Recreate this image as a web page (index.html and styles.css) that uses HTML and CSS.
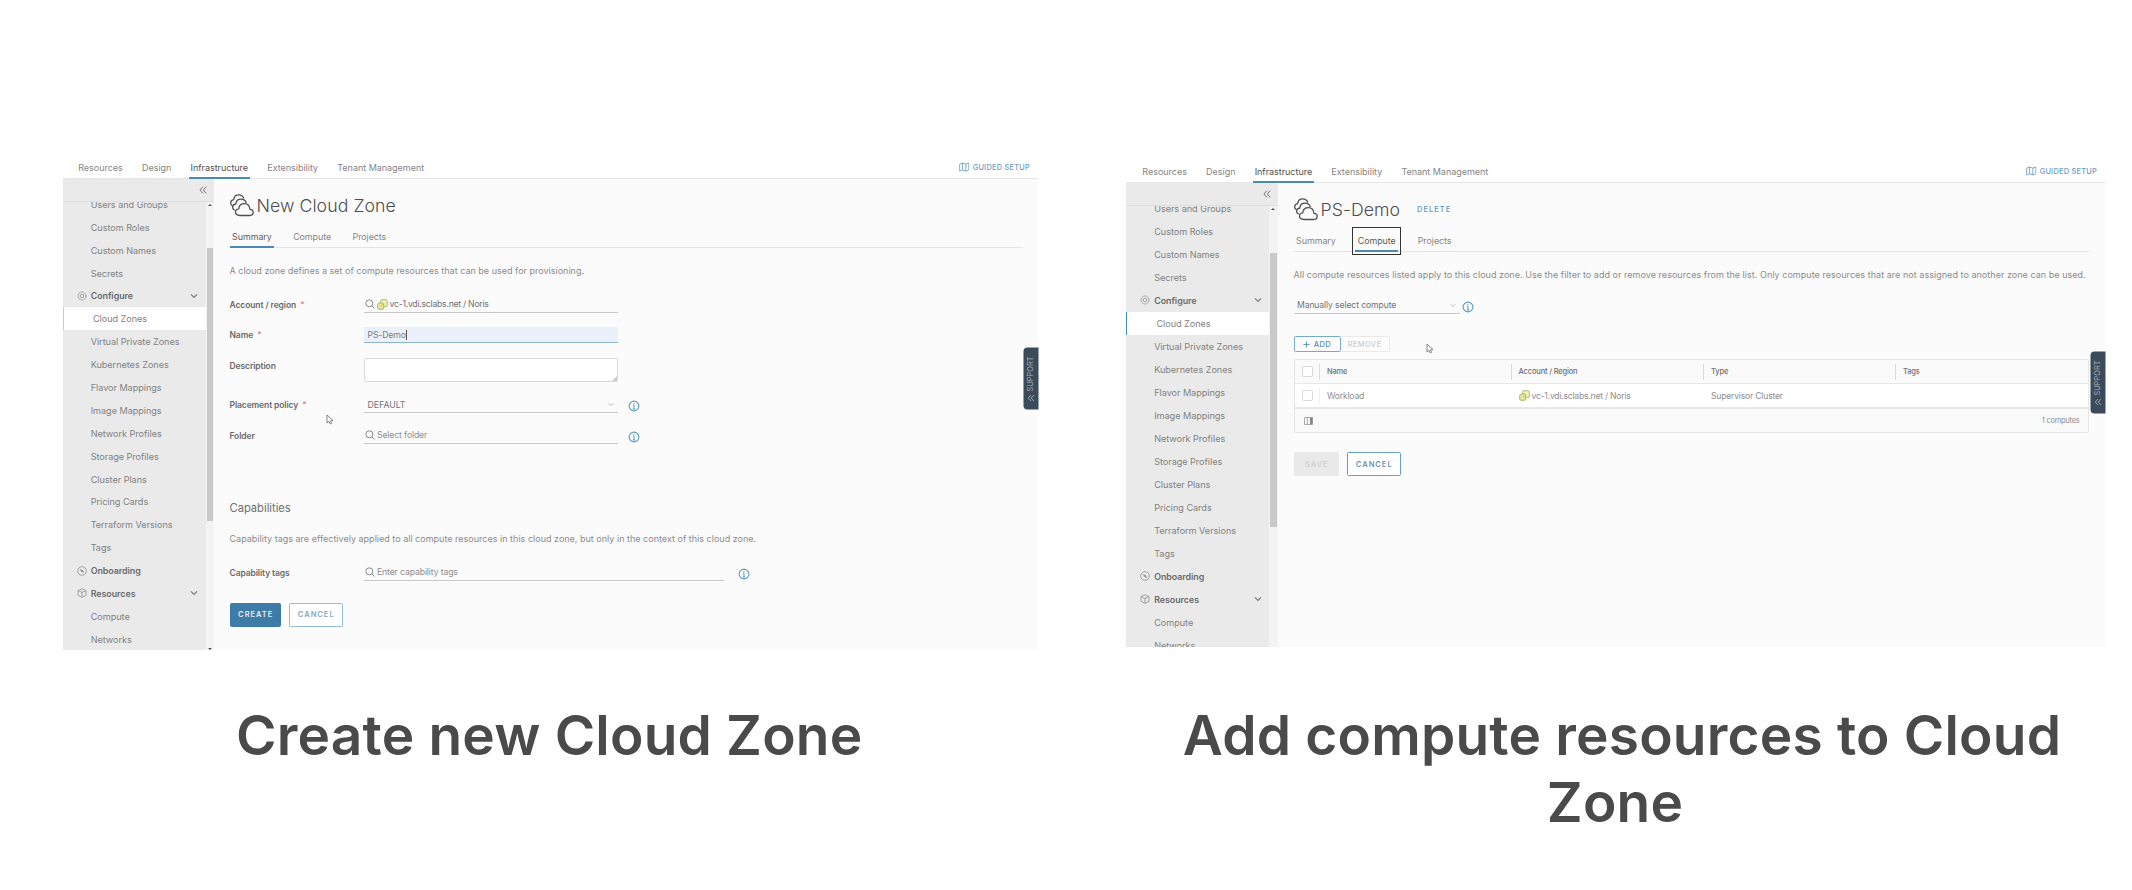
FILE: index.html
```
<!DOCTYPE html>
<html lang="en">
<head>
<meta charset="utf-8">
<title>Cloud Zones</title>
<link rel="stylesheet" href="styles.css">
</head>
<body>
<svg class="defs" width="0" height="0" aria-hidden="true">
  <symbol id="clouds" viewBox="0 0 24 23">
    <g fill="none" stroke="currentColor" stroke-width="1.3" stroke-linejoin="round" stroke-linecap="round">
      <path d="M10 21.5h9.600c2.200 0 3.600-1.400 3.600-3.200s-1.600-3-3.300-3C19.600 12 17.400 9.600 14.300 9.600c-3.200 0-5.300 2.200-5.500 5.200-2 .2-3.300 1.600-3.300 3.300 0 2 1.600 3.400 4.500 3.400z"/>
      <path d="M4.300 15.800C3 15.200 2.600 14.200 2.600 13.200c0-1.700 1.400-3 3.200-3.200.3-3 2.300-4.900 5.200-4.900 2.600 0 4.500 1.400 5.200 3.600"/>
      <path d="M1.800 11.300C.9 10.600.7 9.600.7 8.800c0-1.600 1.200-2.900 3-3.100C4 2.700 6 .9 8.700.9c2.400 0 4.100 1.200 5 3.200"/>
    </g>
  </symbol>
  <symbol id="search" viewBox="0 0 10 10"><circle cx="4.300" cy="4.300" r="3.500" fill="none" stroke="currentColor"/><path d="M6.900 6.900 9.500 9.500" stroke="currentColor"/></symbol>
  <symbol id="vc" viewBox="0 0 11 11"><rect x="3.600" y=".7" width="6.700" height="7" rx="1.600" fill="#eef0b4" stroke="#a9b97b"/><rect x=".7" y="4" width="6" height="6.300" rx="1.500" fill="#e3e79f" stroke="#a9b96b"/><path d="M4 7.200 7 4.200" stroke="#e9c94e" stroke-width="1.200"/></symbol>
  <symbol id="info" viewBox="0 0 12 12"><circle cx="6" cy="6" r="4.900" fill="none" stroke="currentColor" stroke-width="1.100"/><path d="M6 3v1.200M5 5.200h1V9M4.700 9h2.600" fill="none" stroke="currentColor" stroke-width="1"/></symbol>
  <symbol id="down" viewBox="0 0 8 6"><path d="M1 1.300 4 4.400 7 1.300" fill="none" stroke="currentColor" stroke-width="1.100"/></symbol>
  <symbol id="collapse" viewBox="0 0 8 8"><path d="M4 .6.900 4 4 7.400M7.300.6 4.200 4l3.100 3.400" fill="none" stroke="currentColor" stroke-width="1"/></symbol>
  <symbol id="map" viewBox="0 0 11 10"><path d="M.7 2 3.700.8 7.200 2 10.300.8V8L7.200 9.200 3.700 8 .7 9.200zM3.700.8V8M7.200 2v7.200" fill="none" stroke="currentColor" stroke-width=".9"/></symbol>
  <symbol id="gear" viewBox="0 0 10 10"><circle cx="5" cy="5" r="4" fill="none" stroke="currentColor" stroke-width=".9" stroke-dasharray="2 .5"/><circle cx="5" cy="5" r="1.800" fill="none" stroke="currentColor" stroke-width=".8"/></symbol>
  <symbol id="compass" viewBox="0 0 10 10"><circle cx="5" cy="5" r="4.300" fill="none" stroke="currentColor" stroke-width=".8"/><path d="M2.800 2.900 5.900 4.200 7.200 7.100 4.200 5.800z" fill="currentColor"/></symbol>
  <symbol id="cube" viewBox="0 0 10 10"><path d="M5 .8 9 2.600V7.400L5 9.300 1 7.400V2.600zM1 2.600 5 4.400 9 2.600M5 4.400V9.300" fill="none" stroke="currentColor" stroke-width=".8"/></symbol>
  <symbol id="pointer" viewBox="0 0 8 12"><path d="M1 1v8l2-1.600L4.300 10l1.300-.7L4.500 6.800 7 6.500z" fill="#fff" stroke="#777" stroke-width=".9" stroke-linejoin="round"/></symbol>
</svg>

<main class="board">
  <section class="slide slide-create">
    <div class="app">
      <header class="topnav">
        <nav><a>Resources</a><a>Design</a><a class="on">Infrastructure</a><a>Extensibility</a><a>Tenant Management</a></nav>
        <a class="guided"><svg><use href="#map"/></svg>GUIDED SETUP</a>
      </header>
      <div class="body">
        <aside class="side">
          <div class="strip"><svg><use href="#collapse"/></svg></div>
          <div class="scroll">
            <ul>
              <li>Users and Groups</li><li>Custom Roles</li><li>Custom Names</li><li>Secrets</li>
              <li class="group"><svg class="gi"><use href="#gear"/></svg>Configure<svg class="ch"><use href="#down"/></svg></li>
              <li class="current">Cloud Zones</li>
              <li>Virtual Private Zones</li><li>Kubernetes Zones</li><li>Flavor Mappings</li><li>Image Mappings</li><li>Network Profiles</li><li>Storage Profiles</li><li>Cluster Plans</li><li>Pricing Cards</li><li>Terraform Versions</li><li>Tags</li>
              <li class="group"><svg class="gi"><use href="#compass"/></svg>Onboarding</li>
              <li class="group"><svg class="gi"><use href="#cube"/></svg>Resources<svg class="ch"><use href="#down"/></svg></li>
              <li>Compute</li><li>Networks</li>
            </ul>
            <div class="bar"><i class="up"></i><b></b><i class="dn"></i></div>
          </div>
        </aside>
        <div class="content">
          <div class="title"><svg><use href="#clouds"/></svg><h1>New Cloud Zone</h1></div>
          <div class="tabs"><a class="on">Summary</a><a>Compute</a><a>Projects</a></div>
          <p class="lead">A cloud zone defines a set of compute resources that can be used for provisioning.</p>
          <div class="row r-account"><label>Account / region <em>*</em></label><div class="field dark"><svg class="s"><use href="#search"/></svg><svg class="v"><use href="#vc"/></svg><span class="vct">vc-1.vdi.sclabs.net / Noris</span></div></div>
          <div class="row r-name"><label>Name <em>*</em></label><div class="field focus"><span>PS-Demo</span><i class="caret"></i></div></div>
          <div class="row r-desc"><label>Description</label><div class="area"><svg viewBox="0 0 6 6"><path d="M0 6 6 0V6z" fill="#ccc"/></svg></div></div>
          <div class="row r-policy"><label>Placement policy <em>*</em></label><div class="field dark pad"><span class="def">DEFAULT</span><svg class="c"><use href="#down"/></svg></div><svg class="info"><use href="#info"/></svg></div>
          <div class="row r-folder"><label>Folder</label><div class="field"><svg class="s"><use href="#search"/></svg><span class="ph">Select folder</span></div><svg class="info"><use href="#info"/></svg></div>
          <h2>Capabilities</h2>
          <p class="lead caps">Capability tags are effectively applied to all compute resources in this cloud zone, but only in the context of this cloud zone.</p>
          <div class="row r-tags"><label>Capability tags</label><div class="field wide"><svg class="s"><use href="#search"/></svg><span class="ph">Enter capability tags</span></div><svg class="info far"><use href="#info"/></svg></div>
          <div class="actions"><button class="btn primary">CREATE</button><button class="btn outline soft">CANCEL</button></div>
        </div>
      </div>
      <div class="support"><svg><use href="#collapse"/></svg>SUPPORT</div>
      <svg class="pointer"><use href="#pointer"/></svg>
    </div>
    <h3>Create new Cloud Zone</h3>
  </section>

  <section class="slide slide-compute">
    <div class="app">
      <header class="topnav">
        <nav><a>Resources</a><a>Design</a><a class="on">Infrastructure</a><a>Extensibility</a><a>Tenant Management</a></nav>
        <a class="guided"><svg><use href="#map"/></svg>GUIDED SETUP</a>
      </header>
      <div class="body">
        <aside class="side">
          <div class="strip"><svg><use href="#collapse"/></svg></div>
          <div class="scroll">
            <ul>
              <li>Users and Groups</li><li>Custom Roles</li><li>Custom Names</li><li>Secrets</li>
              <li class="group"><svg class="gi"><use href="#gear"/></svg>Configure<svg class="ch"><use href="#down"/></svg></li>
              <li class="current">Cloud Zones</li>
              <li>Virtual Private Zones</li><li>Kubernetes Zones</li><li>Flavor Mappings</li><li>Image Mappings</li><li>Network Profiles</li><li>Storage Profiles</li><li>Cluster Plans</li><li>Pricing Cards</li><li>Terraform Versions</li><li>Tags</li>
              <li class="group"><svg class="gi"><use href="#compass"/></svg>Onboarding</li>
              <li class="group"><svg class="gi"><use href="#cube"/></svg>Resources<svg class="ch"><use href="#down"/></svg></li>
              <li>Compute</li><li>Networks</li>
            </ul>
            <div class="bar"><i class="up"></i><b></b></div>
          </div>
        </aside>
        <div class="content">
          <div class="title"><svg><use href="#clouds"/></svg><h1>PS-Demo</h1><a class="delete">DELETE</a></div>
          <div class="tabs"><a>Summary</a><a class="on boxed">Compute</a><a>Projects</a></div>
          <p class="lead">All compute resources listed apply to this cloud zone. Use the filter to add or remove resources from the list. Only compute resources that are not assigned to another zone can be used.</p>
          <div class="filter"><div class="field dark"><span>Manually select compute</span><svg class="c"><use href="#down"/></svg></div><svg class="info"><use href="#info"/></svg></div>
          <div class="tools"><button class="add"><svg viewBox="0 0 8 8"><path d="M4 .5v7M.5 4h7" stroke="currentColor"/></svg>ADD</button><button class="remove">REMOVE</button></div>
          <div class="table">
            <div class="tr th"><i class="box"></i><span>Name</span><span>Account / Region</span><span>Type</span><span>Tags</span></div>
            <div class="tr td"><i class="box"></i><span>Workload</span><span class="acct"><svg class="v"><use href="#vc"/></svg>vc-1.vdi.sclabs.net / Noris</span><span>Supervisor Cluster</span><span></span></div>
            <div class="tf"><svg viewBox="0 0 9 8"><path d="M.5.5h8v7h-8zM3.300.5v7" fill="none" stroke="#999" stroke-width=".8"/><path d="M6 .5h2.500v7H6z" fill="#888"/></svg><span>1 computes</span></div>
          </div>
          <div class="actions"><button class="btn disabled">SAVE</button><button class="btn outline">CANCEL</button></div>
        </div>
      </div>
      <div class="support"><svg><use href="#collapse"/></svg>SUPPORT</div>
      <svg class="pointer"><use href="#pointer"/></svg>
    </div>
    <h3>Add compute resources to Cloud Zone&nbsp;</h3>
  </section>
</main>
</body>
</html>
```
FILE: styles.css
```
* { box-sizing: border-box; }
body { margin: 0; background: #fff; font-family: Inter, "Liberation Sans", sans-serif; color: #777; }
h1, h2, h3, p, ul { margin: 0; padding: 0; font-weight: 400; }
ul { list-style: none; }
svg { display: block; flex: none; overflow: visible; }
button { font-family: inherit; margin: 0; padding: 0; }
.defs { position: absolute; }

.board { display: flex; height: 890px; overflow: hidden; }
.slide { flex: none; }
.slide-create { width: 975.500px; margin-left: 62.500px; padding-top: 155.800px; --pitch: 22.9px; }
.slide-compute { width: 979px; margin-left: 88px; padding-top: 159.800px; --pitch: 23px; }
.app { position: relative; display: flex; flex-direction: column; }
.slide-create .app { height: 494.200px; }
.slide-compute .app { height: 486.800px; }

.topnav { flex: none; height: 23.500px; border-bottom: 1px solid #e6e6e6; display: flex; justify-content: space-between; font-size: 9px; line-height: 23px; letter-spacing: -.02px; color: #858585; }
.topnav nav { display: flex; padding-left: 13.700px; }
.topnav nav a { height: 23.500px; padding: 0 2px; margin-right: 15.200px; }
.topnav nav a.on { color: #505050; border-bottom: 2px solid #4a8ab5; }
.slide-compute .topnav nav { padding-left: 14.300px; }
.guided { display: flex; align-items: center; gap: 3px; margin-right: 8px; font-size: 7.400px; font-weight: 500; letter-spacing: .25px; color: #6a9dbd; }
.guided svg { width: 10.500px; height: 10px; }

.body { flex: 1; min-height: 0; display: flex; background: #fbfbfb; }
.side { flex: none; width: 151.500px; display: flex; flex-direction: column; background: #eaeaea; }
.strip { flex: none; height: 23px; border-bottom: 1px solid #dedede; display: flex; align-items: center; justify-content: flex-end; padding-right: 7px; color: #777; }
.strip svg { width: 8px; height: 8px; }
.scroll { flex: 1; min-height: 0; display: flex; overflow: hidden; }
.scroll ul { width: 143px; margin-top: -9.400px; }
.scroll li { display: flex; align-items: center; height: var(--pitch); padding-left: 28.200px; font-size: 9.100px; letter-spacing: -.03px; color: #828282; white-space: nowrap; }
.scroll .group { padding-left: 14px; font-weight: 600; font-size: 8.900px; letter-spacing: -.05px; color: #6a6a6a; }
.gi { width: 10px; height: 10px; margin-right: 4.200px; color: #929292; }
.ch { width: 8px; height: 6px; margin-left: auto; margin-right: 7.500px; color: #777; }
.scroll .current { background: #fff; border-left: 1px solid #4a8ab5; padding-left: 29.500px; }
.slide-create .current { border-color: #b5d0e2; }
.bar { width: 8.500px; display: flex; flex-direction: column; align-items: center; background: #f3f3f3; }
.bar b { width: 6.500px; height: 272.500px; margin-top: 42px; background: #c9c9c9; }
.up, .dn { width: 0; height: 0; border: 2px solid transparent; }
.up { border-bottom-color: #555; margin-top: 2px; border-top-width: 0; }
.dn { border-top-color: #555; margin-top: auto; border-bottom-width: 0; }

.content { flex: 1; padding-left: 15.500px; padding-right: 16px; }
.title { display: flex; align-items: center; height: 31px; margin-top: 10.800px; color: #4e4e4e; }
.title svg { width: 24px; height: 23px; }
h1 { margin-left: 3px; font-size: 17.700px; line-height: 31px; font-weight: 300; letter-spacing: .06px; }
.delete { margin-left: 17px; font-size: 7.500px; font-weight: 500; letter-spacing: 1px; color: #5c97bd; }
.tabs { display: flex; height: 21.500px; margin-top: 5px; border-bottom: 1px solid #e4e4e4; font-size: 8.900px; line-height: 21px; letter-spacing: -.04px; color: #858585; }
.tabs a { height: 21.500px; padding: 0 2.600px; margin-right: 16.200px; }
.tabs .on { color: #5c5c5c; border-bottom: 2px solid #4a8ab5; }
.slide-compute .tabs a { margin-right: 16.800px; }
.tabs .boxed { outline: 1px solid #333; outline-offset: 2px; }
.lead { margin-top: 13.300px; font-size: 9px; line-height: 20px; letter-spacing: .01px; white-space: nowrap; color: #8b8b8b; }
.slide-compute .lead { letter-spacing: .04px; }

.row { display: flex; height: 16px; font-size: 8.700px; letter-spacing: -.14px; }
.row label { width: 134.500px; font-size: 8.500px; font-weight: 600; line-height: 16px; letter-spacing: -.1px; color: #6a6a6a; }
.row em { margin-left: 2px; color: #c78b8b; font-style: normal; font-weight: 400; }
.field { display: flex; align-items: center; width: 254px; height: 16px; border-bottom: 1px solid #c8c8c8; color: #8e8e8e; }
.field.dark { color: #727272; }
.field .s { width: 10px; height: 10px; margin-left: .5px; color: #888; }
.field .v { width: 11px; height: 11px; margin: 0 2px; }
.field .vct { letter-spacing: -.26px; }
.field .def { letter-spacing: .03px; }
.field .ph { margin-left: 2.500px; }
.field .c { width: 6px; height: 5px; margin-left: auto; margin-right: 4px; color: #aaa; }
.field.pad, .focus { padding-left: 3.500px; }
.focus { background: #ebf1fb; border-color: #8fb4cd; color: #7c7c7c; }
.caret { width: 1px; height: 10px; background: #555; }
.info { width: 12px; height: 12px; margin: 3px 0 0 9.700px; color: #5d9bc2; }
.info.far { margin-left: 14px; }
.area { width: 254px; height: 24px; background: #fff; border: 1px solid #dadada; border-radius: 2px; display: flex; align-items: flex-end; justify-content: flex-end; }
.area svg { width: 5px; height: 5px; }
.r-account { margin-top: 16px; }
.r-name { margin-top: 14.500px; }
.r-desc { margin-top: 15px; height: 24px; }
.r-policy { margin-top: 15px; }
.r-folder { margin-top: 14.500px; }
h2 { margin-top: 54.200px; font-size: 11.200px; line-height: 20px; letter-spacing: -.02px; color: #707070; }
.lead.caps { margin-top: 10.500px; }
.r-tags { margin-top: 16px; }
.field.wide { width: 360px; }

.actions { display: flex; gap: 8px; margin-top: 22.500px; }
.btn { height: 23.500px; border: 1px solid transparent; border-radius: 1.500px; font-size: 7.500px; font-weight: 600; letter-spacing: 1px; text-indent: 1px; }
.primary { width: 51.500px; background: #3f7ba7; border-color: #3f7ba7; color: #e4eef5; }
.outline { width: 53.500px; background: #fff; border-color: #6b9fc2; color: #6594b4; }
.soft { border-color: #9bbdd4; color: #84a8c0; }
.disabled { width: 45.500px; background: #e9e9e9; color: #d0d0d0; }

.slide-compute .bar b { height: 274px; margin-top: 43px; }
.slide-compute .content { padding-left: 16px; }
.filter { display: flex; margin-top: 12.300px; font-size: 8.600px; letter-spacing: -.1px; }
.filter .field { width: 166px; height: 17px; padding-left: 3.500px; }
.filter .info { margin: 4px 0 0 2.500px; }
.tools { display: flex; margin-top: 22.200px; font-size: 7.500px; }
.tools button { height: 16px; font-size: 7.500px; font-weight: 500; letter-spacing: .4px; background: #fdfdfd; border-radius: 1.500px; display: flex; align-items: center; justify-content: center; }
.tools .add { width: 47px; gap: 4px; border: 1px solid #78abc9; color: #558fb4; }
.add svg { width: 7px; height: 7px; }
.tools .remove { width: 49px; border: 1px solid #e9e9e9; border-left: 0; color: #ccc; }
.table { width: 795px; margin-top: 7px; border: 1px solid #e6e6e6; border-radius: 2px; background: #fafafa; }
.tr { display: grid; grid-template-columns: 24.500px 191.500px 192.500px 192px 1fr; align-items: center; height: 24px; font-size: 8.600px; letter-spacing: -.2px; border-bottom: 1px solid #e8e8e8; }
.tr span { display: flex; align-items: center; height: 16px; padding-left: 7px; }
.th { font-size: 7.500px; font-weight: 500; letter-spacing: -.16px; color: #707070; }
.th span { border-left: 1px solid #dcdcdc; }
.td { height: 25px; background: #fff; border-bottom: 2px solid #e8e8e8; color: #8e8e8e; }
.td span { padding-left: 8px; }
.td span:nth-child(2) { border-left: 1px solid #eee; padding-left: 7px; }
.td .v { width: 11px; height: 11px; margin-right: 2px; }
.td .acct { letter-spacing: -.22px; }
.box { width: 11px; height: 11px; margin-left: 7.500px; background: #fff; border: 1px solid #dadada; border-radius: 2px; }
.tf { display: flex; align-items: center; justify-content: space-between; height: 23px; padding: 0 8px 0 9.500px; font-size: 7.500px; letter-spacing: -.25px; color: #8e8e8e; }
.tf svg { width: 9px; height: 8px; }
.slide-compute .actions { margin-top: 19px; }

.support { position: absolute; right: 0; top: 192px; width: 14.500px; height: 61.500px; background: #3b4b5b; border-radius: 0 4px 4px 0; writing-mode: vertical-rl; transform: rotate(180deg); display: flex; align-items: center; padding-top: 8px; gap: 3px; font-size: 7.500px; letter-spacing: -.05px; color: #a9b3bc; line-height: 14px; }
.support svg { width: 7px; height: 7px; transform: rotate(180deg); }
.pointer { position: absolute; left: 263.500px; top: 258px; width: 8px; height: 12px; }
.slide-compute .pointer { left: 300px; top: 183px; }

h3 { text-align: center; font-size: 55px; line-height: 67px; font-weight: 600; color: #4a4a4a; letter-spacing: .2px; }
.slide-create h3 { margin-top: 52px; margin-right: 2px; }
.slide-compute h3 { margin: 55.400px 30px 0 43px; }
```
